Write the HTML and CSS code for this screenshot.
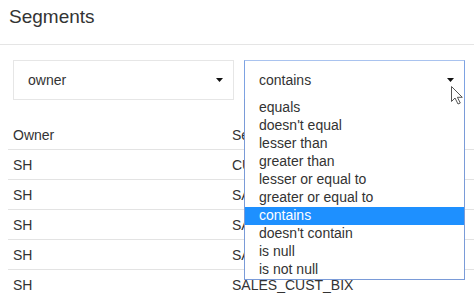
FILE: index.html
```html
<!DOCTYPE html>
<html>
<head>
<meta charset="utf-8">
<title>Segments</title>
<link rel="stylesheet" href="styles.css">
</head>
<body>
<header class="header">
  <h1 class="title">Segments</h1>
</header>
<section class="filters">
  <div class="select">
    <span class="select-value">owner</span>
    <svg class="caret" width="7" height="4" viewBox="0 0 7 4"><polygon points="0,0 7,0 3.5,4" fill="#111"/></svg>
  </div>
  <div class="select select-open">
    <span class="select-value">contains</span>
    <svg class="caret" width="7" height="4" viewBox="0 0 7 4"><polygon points="0,0 7,0 3.5,4" fill="#111"/></svg>
    <ul class="options">
      <li class="option">equals</li>
      <li class="option">doesn't equal</li>
      <li class="option">lesser than</li>
      <li class="option">greater than</li>
      <li class="option">lesser or equal to</li>
      <li class="option">greater or equal to</li>
      <li class="option option-active">contains</li>
      <li class="option">doesn't contain</li>
      <li class="option">is null</li>
      <li class="option">is not null</li>
    </ul>
    <svg class="cursor" width="13" height="19" viewBox="0 0 13 19"><path d="M0.5 0.5 V15.5 L4 12 L7 18 L9.3 17 L6.4 11.3 H11.3 Z" fill="#fff" stroke="#555" stroke-width="1" stroke-linejoin="round"/></svg>
  </div>
</section>
<div class="grid">
  <div class="row row-head"><div class="cell">Owner</div><div class="cell">Segment Name</div></div>
  <div class="row"><div class="cell">SH</div><div class="cell">CUSTOMERS_PK</div></div>
  <div class="row"><div class="cell">SH</div><div class="cell">SALES_CHANNEL_BIX</div></div>
  <div class="row"><div class="cell">SH</div><div class="cell">SALES_PROD_BIX</div></div>
  <div class="row"><div class="cell">SH</div><div class="cell">SALES_PROMO_BIX</div></div>
  <div class="row"><div class="cell">SH</div><div class="cell">SALES_CUST_BIX</div></div>
</div>
</body>
</html>
```
FILE: styles.css
```css
* { box-sizing: border-box; }
html, body {
  margin: 0;
  padding: 0;
  background: #fff;
  color: #333;
  font-family: "Liberation Sans", Arial, sans-serif;
  font-size: 14px;
  overflow: hidden;
}
.header {
  height: 45px;
  padding: 6px 0 0 9px;
  border-bottom: 1px solid #e5e5e5;
}
.title {
  margin: 0;
  font-size: 19px;
  font-weight: normal;
  line-height: 22px;
  color: #333;
}
.filters {
  display: flex;
  gap: 10px;
  padding: 15px 0 0 13px;
}
.select {
  position: relative;
  width: 221px;
  height: 40px;
  border: 1px solid #e6e6e6;
  display: flex;
  align-items: center;
  justify-content: space-between;
  padding: 0 10px 0 14px;
  background: #fff;
}
.select-open {
  border-color: #7da2e2;
  border-top-color: #a9c3ef;
  z-index: 2;
}
.caret { display: block; }
.options {
  position: absolute;
  left: -1px;
  top: 100%;
  width: 221px;
  margin: 0;
  padding: 0;
  list-style: none;
  background: #fff;
  border: 1px solid #7a9bd8;
  border-top: none;
}
.option {
  height: 18px;
  line-height: 17px;
  padding-left: 14px;
  color: #333;
  white-space: nowrap;
}
.option-active {
  background: #1e90ff;
  color: #fff;
}
.cursor {
  position: absolute;
  left: 206px;
  top: 25px;
}
.grid {
  margin: 20px 0 0 8px;
}
.row {
  display: grid;
  grid-template-columns: 219px 1fr;
  height: 30px;
  border-bottom: 1px solid #e3e3e3;
  align-items: center;
}
.cell {
  padding: 0 5px;
  white-space: nowrap;
  overflow: hidden;
}
```
